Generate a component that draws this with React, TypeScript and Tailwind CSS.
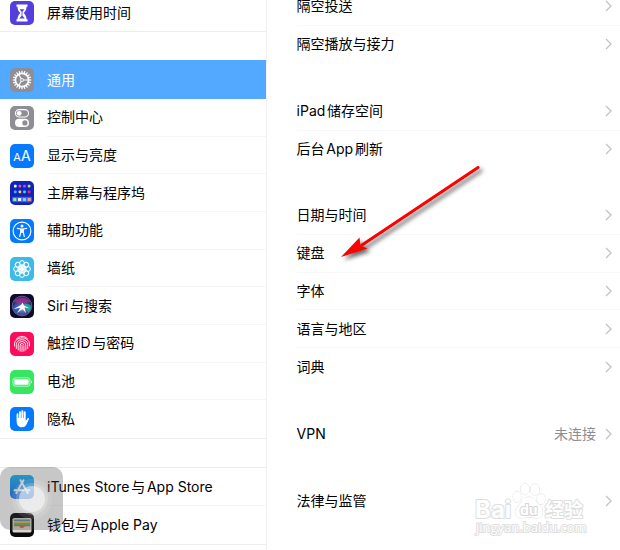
import type { ReactNode } from "react";

type MenuItem = {
  label: string;
  icon: ReactNode;
  active?: boolean;
};

type SettingItem = {
  label: string;
  value?: string;
};

const ScreenTimeIcon = () => (
  <svg viewBox="0 0 24 24" className="w-6 h-6">
    <rect width="24" height="24" rx="5" fill="#5340dc" />
    <path
      d="M6.500 3.500h11v2.200h-1c0 3-1.200 4.600-2.800 6.300 1.600 1.700 2.800 3.300 2.800 6.300h1v2.200h-11v-2.200h1c0-3 1.200-4.600 2.800-6.300C8.700 10.300 7.500 8.700 7.500 5.700h-1z"
      fill="#fff"
    />
    <path d="M9.800 8.200h4.400L12.600 11v4l2.200 2.500H9.200l2.200-2.500v-4z" fill="#5340dc" />
    <path d="M12 10v5" stroke="#fff" strokeWidth="0.600" />
  </svg>
);

const teeth = Array.from({ length: 20 }, (_, i) => i * 18);

const GearIcon = () => (
  <svg viewBox="0 0 24 24" className="w-6 h-6">
    <rect width="24" height="24" rx="5" fill="#8f8e94" />
    <g stroke="#fff" fill="none">
      {teeth.map((angle) => (
        <path key={angle} d="M12 2.700v2.500" strokeWidth="1.200" transform={`rotate(${angle} 12 12)`} />
      ))}
      <circle cx="12" cy="12" r="6.600" strokeWidth="1.600" />
      <circle cx="12" cy="12" r="1.500" strokeWidth="0.900" />
      <path d="M13.500 12H18.500M11.200 10.700 8.600 6.300M11.200 13.300 8.600 17.700" strokeWidth="1.100" />
    </g>
  </svg>
);

const ControlIcon = () => (
  <svg viewBox="0 0 24 24" className="w-6 h-6">
    <rect width="24" height="24" rx="5" fill="#8f8e94" />
    <rect x="5.500" y="3.600" width="13" height="7.400" rx="3.700" fill="none" stroke="#fff" strokeWidth="1.100" />
    <circle cx="9.200" cy="7.300" r="2.400" fill="#fff" />
    <rect x="5" y="12.800" width="14" height="8.200" rx="4.100" fill="#fff" />
    <circle cx="14.900" cy="16.900" r="2.600" fill="#8f8e94" />
  </svg>
);

const DisplayIcon = () => (
  <span className="w-6 h-6 rounded-[5px] bg-[#067aff] text-white flex items-baseline justify-center leading-6">
    <span className="text-[11px]">A</span>
    <span className="text-[14px]">A</span>
  </span>
);

const dots = [
  ["#fff", "#ee4f8c", "#9b5cf0", "#b8e070"],
  ["#3fb8f5", "#f0d060", "#4fd6c8", "#ee2f5c"],
];

const HomeScreenIcon = () => (
  <svg viewBox="0 0 24 24" className="w-6 h-6">
    <rect width="24" height="24" rx="5" fill="#1122bd" />
    {dots.map((row, y) =>
      row.map((color, x) => (
        <rect key={`${y}-${x}`} x={4 + x * 4.600} y={3.800 + y * 5.800} width="2.600" height="2.600" rx="0.600" fill={color} />
      ))
    )}
    <rect x="2" y="15.800" width="20" height="5.400" rx="1.400" fill="#4262d8" />
    <rect x="3.200" y="16.900" width="3.200" height="3.200" rx="0.600" fill="#7df09a" />
    <rect x="8" y="16.900" width="3.200" height="3.200" rx="0.600" fill="#eef2fc" />
    <rect x="12.800" y="16.900" width="3.200" height="3.200" rx="0.600" fill="#6fd8f6" />
    <rect x="17.600" y="16.900" width="3.200" height="3.200" rx="0.600" fill="#f4a080" />
  </svg>
);

const AccessibilityIcon = () => (
  <svg viewBox="0 0 24 24" className="w-6 h-6">
    <rect width="24" height="24" rx="5" fill="#067aff" />
    <circle cx="12" cy="12" r="8.900" fill="none" stroke="#fff" strokeWidth="1.100" />
    <circle cx="12" cy="7.100" r="1.500" fill="#fff" />
    <path
      d="M7.300 9.400l3.500.600v3.200L9.700 17.500M16.700 9.400l-3.500.600v3.200l1.100 4.300"
      fill="none"
      stroke="#fff"
      strokeWidth="1.200"
      strokeLinecap="round"
      strokeLinejoin="round"
    />
    <path d="M10.600 9.500h2.800v4.300h-2.800z" fill="#fff" />
  </svg>
);

const petals = [0, 45, 90, 135, 180, 225, 270, 315];

const WallpaperIcon = () => (
  <svg viewBox="0 0 24 24" className="w-6 h-6">
    <rect width="24" height="24" rx="5" fill="#3dbbe8" />
    <g fill="none" stroke="#fff" strokeWidth="1">
      {petals.map((angle) => (
        <g key={angle} transform={`rotate(${angle} 12 12)`}>
          <circle cx="12" cy="6" r="2.400" />
          <ellipse cx="12" cy="9.600" rx="1.200" ry="1.800" />
        </g>
      ))}
      <circle cx="12" cy="12" r="1.200" />
    </g>
  </svg>
);

const SiriIcon = () => (
  <svg viewBox="0 0 24 24" className="w-6 h-6">
    <defs>
      <radialGradient id="orb" cx="50%" cy="60%" r="60%">
        <stop offset="0" stopColor="#d8f0ff" />
        <stop offset="0.300" stopColor="#5a6fb8" />
        <stop offset="1" stopColor="#1c1440" />
      </radialGradient>
    </defs>
    <rect width="24" height="24" rx="5" fill="#0f0b2c" />
    <circle cx="12" cy="12" r="9.800" fill="url(#orb)" />
    <path d="M3.500 8C7 2 17 2 20.500 8c-4 0-6 1.500-8.500 4C9 9 7 8 3.500 8z" fill="#a42d90" opacity="0.750" />
    <path d="M3 13c2-4 5-3 9 0-3 1-4 5-6 6.500-2-1-3-3.500-3-6.500z" fill="#2c5cc8" opacity="0.800" />
    <path d="M12 12c4-3 7-2 9.200 0 0 3-1 5-3 7C17 16 15 13 12 12z" fill="#22b498" opacity="0.800" />
    <path d="M3.500 15l7.500-4 1.500-2.500 1.500 3 6 3-5.500-1.300 1.500 6-3.500-4.500-5.500 4.500 3.500-5.500z" fill="#fff" />
    <circle cx="12" cy="12" r="9.800" fill="none" stroke="#8276ac" strokeWidth="0.700" />
  </svg>
);

const TouchIdIcon = () => (
  <svg viewBox="0 0 24 24" className="w-6 h-6">
    <rect width="24" height="24" rx="5" fill="#fc0d5b" />
    <g fill="none" stroke="#fff" strokeWidth="0.900" strokeLinecap="round">
      <path d="M6.500 6.700C9.500 3.500 14.500 3.500 17.500 6.700" />
      <path d="M4.500 14V12a7.500 6.200 0 0 1 15 0v2" />
      <path d="M6.300 16.500V12.500a5.700 4.800 0 0 1 11.400 0v4" />
      <path d="M8.200 18V13a3.800 3.500 0 0 1 7.600 0v5" />
      <path d="M10.100 19.200V13.500a1.900 2 0 0 1 3.800 0v5.700" />
      <path d="M12 13.500v6" />
    </g>
  </svg>
);

const BatteryIcon = () => (
  <svg viewBox="0 0 24 24" className="w-6 h-6">
    <rect width="24" height="24" rx="5" fill="#37e660" />
    <rect x="3" y="7.800" width="17" height="8.400" rx="2.400" fill="none" stroke="#c7f8d0" strokeWidth="0.900" />
    <rect x="4.400" y="9.200" width="14.200" height="5.600" rx="1" fill="#fff" />
    <path d="M21 10.400c1.200.600 1.200 2.600 0 3.200z" fill="#fff" />
  </svg>
);

const PrivacyIcon = () => (
  <svg viewBox="0 0 24 24" className="w-6 h-6">
    <rect width="24" height="24" rx="5" fill="#067aff" />
    <path
      d="M6.600 14V7.200a.9.900 0 0 1 1.800 0V11h.6V5.200a.9.900 0 0 1 1.900 0V11h.5V4.300a.9.900 0 0 1 1.900 0V11h.5V5.300a.9.900 0 0 1 1.900 0V14l1.700-2.500c.7-.900 2-.300 1.500.8l-2.300 5c-.9 2-2.200 3-4.600 3-3.400 0-5.400-2.300-5.400-6.300z"
      fill="#fff"
    />
  </svg>
);

const AppStoreIcon = () => (
  <svg viewBox="0 0 24 24" className="w-6 h-6">
    <defs>
      <linearGradient id="store" x1="0" y1="0" x2="0" y2="1">
        <stop offset="0" stopColor="#18b8f8" />
        <stop offset="1" stopColor="#1c6ff0" />
      </linearGradient>
    </defs>
    <rect width="24" height="24" rx="5" fill="url(#store)" />
    <g stroke="#fff" strokeWidth="1.900" strokeLinecap="round">
      <path d="M10.500 5.200 17.700 18M13.500 5.200 8 15M6.800 17.200 6.300 18.200M4.500 15.300h9.200M16.500 15.300h3" />
    </g>
  </svg>
);

const WalletIcon = () => (
  <svg viewBox="0 0 24 24" className="w-6 h-6">
    <rect width="24" height="24" rx="5" fill="#0a0a0a" />
    <rect x="2.500" y="5" width="19" height="14.500" rx="1.600" fill="#d8d5cd" />
    <path d="M4 6.500h16v2H4z" fill="#5595b2" />
    <path d="M4 8h16v2H4z" fill="#e9b846" />
    <path d="M4 10h16v2H4z" fill="#6bb166" />
    <path d="M4 12h16v3H4z" fill="#e26055" />
    <path d="M3.500 13.300h5c1.200 0 1.400 1.900 3.500 1.900s2.300-1.900 3.500-1.900h5v5.200h-17z" fill="#d8d5cd" />
  </svg>
);

const menuTop: MenuItem[] = [{ label: "屏幕使用时间", icon: <ScreenTimeIcon /> }];

const menuMain: MenuItem[] = [
  { label: "通用", icon: <GearIcon />, active: true },
  { label: "控制中心", icon: <ControlIcon /> },
  { label: "显示与亮度", icon: <DisplayIcon /> },
  { label: "主屏幕与程序坞", icon: <HomeScreenIcon /> },
  { label: "辅助功能", icon: <AccessibilityIcon /> },
  { label: "墙纸", icon: <WallpaperIcon /> },
  { label: "Siri与搜索", icon: <SiriIcon /> },
  { label: "触控ID与密码", icon: <TouchIdIcon /> },
  { label: "电池", icon: <BatteryIcon /> },
  { label: "隐私", icon: <PrivacyIcon /> },
];

const menuStore: MenuItem[] = [
  { label: "iTunes Store与App Store", icon: <AppStoreIcon /> },
  { label: "钱包与Apple Pay", icon: <WalletIcon /> },
];

const settingGroups: { height: string; items: SettingItem[] }[] = [
  { height: "h-[76px]", items: [{ label: "隔空投送" }, { label: "隔空播放与接力" }] },
  { height: "h-[76px]", items: [{ label: "iPad储存空间" }, { label: "后台App刷新" }] },
  {
    height: "h-[188px]",
    items: [
      { label: "日期与时间" },
      { label: "键盘" },
      { label: "字体" },
      { label: "语言与地区" },
      { label: "词典" },
    ],
  },
  { height: "h-[39px]", items: [{ label: "VPN", value: "未连接" }] },
  { height: "h-[38px]", items: [{ label: "法律与监管" }] },
];

function MenuGroup({ items, className }: { items: MenuItem[]; className: string }) {
  return (
    <div className={`flex flex-col border-b border-[#ececf1] ${className}`}>
      {items.map((item, i) => (
        <button
          key={item.label}
          className={`flex items-center gap-[13px] pl-[10px] text-left ${
            item.active ? "h-[39px] shrink-0 bg-[#53a9ff] text-white" : "flex-1"
          }`}
        >
          {item.icon}
          <span
            className={`flex-1 self-stretch flex items-center whitespace-nowrap ${
              i < items.length - 1 && !item.active ? "border-b border-[#f6f6f8]" : ""
            }`}
          >
            {item.label}
          </span>
        </button>
      ))}
    </div>
  );
}

function SettingGroup({ items, height }: { items: SettingItem[]; height: string }) {
  return (
    <div className={`flex flex-col pl-[30px] ${height}`}>
      {items.map((item, i) => (
        <button
          key={item.label}
          className={`flex-1 flex items-center pr-2 text-left ${
            i < items.length - 1 ? "border-b border-[#f8f8f9]" : ""
          }`}
        >
          <span className="flex-1">{item.label}</span>
          {item.value && <span className="text-[#8e8d93] mr-[9px]">{item.value}</span>}
          <svg viewBox="0 0 7 12" className="w-[7px] h-3" fill="none" stroke="#c3c3c7" strokeWidth="1.300">
            <path d="M1 1l5 5-5 5" />
          </svg>
        </button>
      ))}
    </div>
  );
}

function Arrow() {
  return (
    <svg
      viewBox="0 0 150 100"
      className="absolute left-[338px] top-[164px] w-[150px] h-[100px] pointer-events-none drop-shadow-[3px_3px_2px_rgba(0,0,0,0.6)]"
    >
      <path d="M140 3.500 24 81" stroke="#fe0000" strokeWidth="3" strokeLinecap="round" />
      <path d="M3 93 21.500 73.500 22.500 81.500 29.500 84.500z" fill="#fe0000" />
    </svg>
  );
}

function AssistiveTouch() {
  return (
    <button
      aria-label="AssistiveTouch"
      className="absolute left-0 top-[467px] w-[63px] h-[63px] rounded-[10px] bg-[#45444a]/30 flex items-center justify-center"
    >
      <span className="w-10 h-10 rounded-full bg-white/10 flex items-center justify-center">
        <span className="w-8 h-8 rounded-full bg-white/20 flex items-center justify-center">
          <span className="w-[26px] h-[26px] rounded-full bg-white/50" />
        </span>
      </span>
    </button>
  );
}

function Watermark() {
  return (
    <svg
      viewBox="0 0 116 56"
      className="absolute left-[473px] top-[481px] w-[116px] h-14 pointer-events-none"
      fill="#fff"
      stroke="#dedede"
      strokeWidth="2"
      paintOrder="stroke"
      strokeLinejoin="round"
    >
      <text x="2" y="37" fontSize="24" fontWeight="700">
        Bai
      </text>
      <g strokeWidth="1">
        <ellipse cx="44" cy="16" rx="4" ry="5.500" />
        <ellipse cx="52" cy="8" rx="4.500" ry="5.500" />
        <ellipse cx="62" cy="8.500" rx="4.500" ry="5.500" />
        <ellipse cx="68" cy="18" rx="4" ry="5.500" />
        <path d="M56 16c6 0 7 5 11 9 5 5 3 12-3 12-4 0-5-1-8-1s-4 1-8 1c-6 0-8-7-3-12 4-4 5-9 11-9z" />
      </g>
      <text x="47" y="34" fontSize="14" fontWeight="700" strokeWidth="2" stroke="#d6d6d6">
        du
      </text>
      <text x="72" y="36" fontSize="19" fontWeight="700">
        经验
      </text>
      <text x="3" y="51" fontSize="13" strokeWidth="2" fontFamily="Open Sans, sans-serif">
        jingyan.baidu.com
      </text>
    </svg>
  );
}

export default function App() {
  return (
    <div
      lang="zh-CN"
      className="relative flex h-screen overflow-hidden bg-white text-black text-sm font-['Inter','Noto_Sans_CJK_SC',sans-serif] [text-autospace:normal]"
    >
      {/* Sidebar */}
      <nav className="w-[43%] shrink-0 border-r border-[#f0f0f6]">
        <div className="-mt-1.5">
          <MenuGroup items={menuTop} className="h-[38px]" />
          <MenuGroup items={menuMain} className="h-[379px] mt-7" />
          <MenuGroup items={menuStore} className="h-[78px] mt-7 border-t" />
        </div>
      </nav>

      {/* General settings */}
      <main className="flex-1 min-w-0">
        <div className="-mt-[13px] flex flex-col gap-[29px]">
          {settingGroups.map((group) => (
            <SettingGroup key={group.items[0].label} items={group.items} height={group.height} />
          ))}
        </div>
      </main>

      <Watermark />
      <Arrow />
      <AssistiveTouch />
    </div>
  );
}
